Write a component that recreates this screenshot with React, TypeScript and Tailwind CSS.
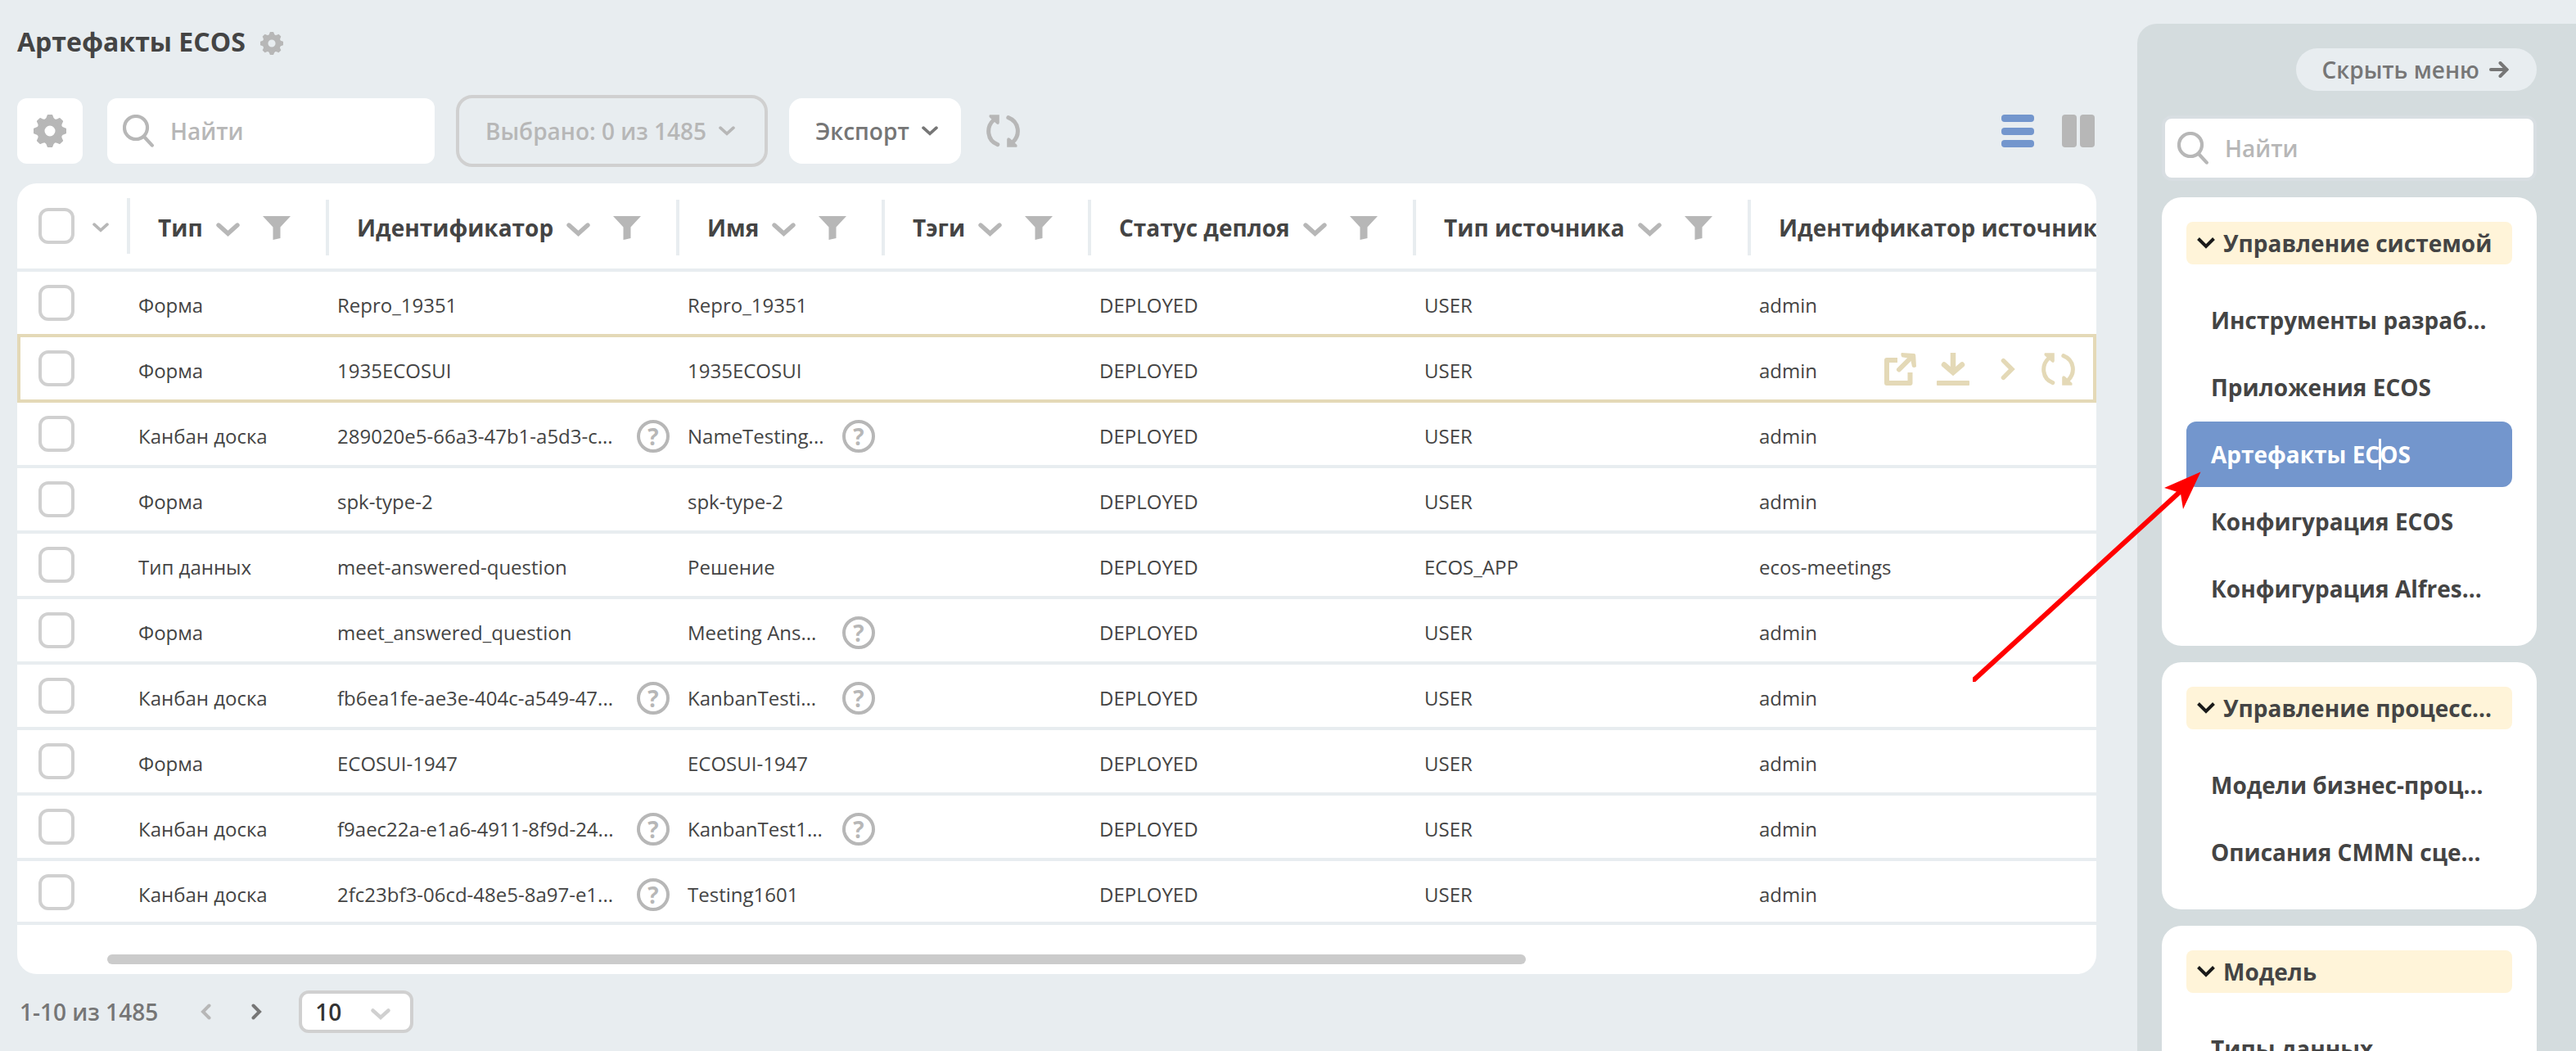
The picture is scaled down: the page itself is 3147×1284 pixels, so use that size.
import type { ReactNode } from "react";

type IconProps = { className?: string };

function GearIcon({ className }: IconProps) {
  return (
    <svg viewBox="-20 -20 40 40" className={className} fill="currentColor" aria-hidden="true">
      <circle r="10.8" fill="none" stroke="currentColor" strokeWidth="8.6" />
      {[0, 45, 90, 135, 180, 225, 270, 315].map((a) => (
        <path key={a} transform={`rotate(${a})`} d="M-2.4 -20H2.4Q3.2 -20 3.4 -19Q4 -15.5 7 -13.4L0 -11L-7 -13.4Q-4 -15.5 -3.4 -19Q-3.2 -20 -2.4 -20Z" />
      ))}
    </svg>
  );
}

function SearchIcon({ className }: IconProps) {
  return (
    <svg viewBox="0 0 38 40" className={className} fill="none" stroke="currentColor" strokeWidth="4.2" strokeLinecap="round" aria-hidden="true">
      <circle cx="16" cy="16" r="14" />
      <path d="M26.5 27.5L35.8 37.6" />
    </svg>
  );
}

function ChevronDown({ className }: IconProps) {
  return (
    <svg viewBox="0 0 29 17" className={className} fill="none" stroke="currentColor" strokeWidth="5.4" strokeLinecap="round" strokeLinejoin="miter" aria-hidden="true">
      <path d="M3 3L14.5 13.3L26 3" />
    </svg>
  );
}

function ChevronRight({ className }: IconProps) {
  return (
    <svg viewBox="0 0 13 20" className={className} fill="none" stroke="currentColor" strokeWidth="4" strokeLinecap="round" aria-hidden="true">
      <path d="M2.5 2.5L10 10L2.5 17.5" />
    </svg>
  );
}

function FilterIcon() {
  return (
    <svg viewBox="0 0 34 29" className="h-[29px] w-[34px] shrink-0" fill="currentColor" aria-hidden="true">
      <path d="M0 0H34L21.5 13.5V27L12.5 29V13.5Z" />
    </svg>
  );
}

function RefreshIcon({ className }: IconProps) {
  return (
    <svg viewBox="0 0 41 40" className={className} fill="none" stroke="currentColor" strokeWidth="5" strokeLinecap="round" aria-hidden="true">
      <path d="M9 6.5C-0.5 15 0.5 31.5 13.8 36.6" />
      <path d="M26.8 3.6C40.5 9 41.5 25 32.5 33.5" />
      <path d="M4 0.2H15.8V10Q15 13 12.5 11.2L3.6 3Q3.2 1 4 0.2Z" fill="currentColor" stroke="none" />
      <path d="M37.2 39.8H25.2V30Q26 27 28.5 28.8L37.4 37Q37.8 39 37.2 39.8Z" fill="currentColor" stroke="none" />
    </svg>
  );
}

function ExternalIcon() {
  return (
    <svg viewBox="0 0 40 40" className="size-10" fill="none" stroke="currentColor" strokeWidth="6" strokeLinejoin="round" aria-hidden="true">
      <path d="M16 9H3V37H31.5V24" />
      <path d="M18 20.5L33 5.5" strokeLinecap="round" strokeWidth="6" />
      <path d="M21 0L36.5 1Q38 1 38.2 3L39 17Q36 19 34 17L32.5 10L29 6.5L21.5 5.2Q19.5 2 21 0Z" fill="currentColor" stroke="none" />
    </svg>
  );
}

function DownloadIcon() {
  return (
    <svg viewBox="0 0 40 40" className="size-10" fill="none" stroke="currentColor" strokeWidth="6.5" aria-hidden="true">
      <path d="M20 0V22" />
      <path d="M9 14.5L20 24L31 14.5" strokeLinecap="round" />
      <rect x="0" y="34" width="40" height="6" rx="1" fill="currentColor" stroke="none" />
    </svg>
  );
}

function ArrowRight() {
  return (
    <svg viewBox="0 0 24 20" className="h-5 w-6 shrink-0" fill="none" stroke="currentColor" strokeWidth="4" strokeLinecap="round" aria-hidden="true">
      <path d="M2 10H21" />
      <path d="M13.5 2L21.5 10L13.5 18" />
    </svg>
  );
}

function MenuChevron() {
  return (
    <svg viewBox="0 0 22 14" className="h-3.5 w-[22px] shrink-0" fill="none" stroke="#1a1a1a" strokeWidth="4" aria-hidden="true">
      <path d="M1.5 1.5L11 11L20.5 1.5" />
    </svg>
  );
}

const headers = ["Тип", "Идентификатор", "Имя", "Тэги", "Статус деплоя", "Тип источника"];

type Row = { type: string; id: string; idHint?: boolean; name: string; nameHint?: boolean; source: string; sourceId: string };

const rows: Row[] = [
  { type: "Форма", id: "Repro_19351", name: "Repro_19351", source: "USER", sourceId: "admin" },
  { type: "Форма", id: "1935ECOSUI", name: "1935ECOSUI", source: "USER", sourceId: "admin" },
  { type: "Канбан доска", id: "289020e5-66a3-47b1-a5d3-c...", idHint: true, name: "NameTesting...", nameHint: true, source: "USER", sourceId: "admin" },
  { type: "Форма", id: "spk-type-2", name: "spk-type-2", source: "USER", sourceId: "admin" },
  { type: "Тип данных", id: "meet-answered-question", name: "Решение", source: "ECOS_APP", sourceId: "ecos-meetings" },
  { type: "Форма", id: "meet_answered_question", name: "Meeting Ans...", nameHint: true, source: "USER", sourceId: "admin" },
  { type: "Канбан доска", id: "fb6ea1fe-ae3e-404c-a549-47...", idHint: true, name: "KanbanTesti...", nameHint: true, source: "USER", sourceId: "admin" },
  { type: "Форма", id: "ECOSUI-1947", name: "ECOSUI-1947", source: "USER", sourceId: "admin" },
  { type: "Канбан доска", id: "f9aec22a-e1a6-4911-8f9d-24...", idHint: true, name: "KanbanTest1...", nameHint: true, source: "USER", sourceId: "admin" },
  { type: "Канбан доска", id: "2fc23bf3-06cd-48e5-8a97-e1...", idHint: true, name: "Testing1601", source: "USER", sourceId: "admin" },
];

const activeRow = 1;

function Checkbox({ label }: { label: string }) {
  return (
    <input
      type="checkbox"
      aria-label={label}
      className="block size-11 shrink-0 appearance-none rounded-xl border-4 border-[#d0d0d0] bg-white checked:bg-[#7396cd]"
    />
  );
}

function Hint() {
  return (
    <button
      type="button"
      aria-label="Подсказка"
      className="mr-3 flex size-10 shrink-0 items-center justify-center rounded-full border-4 border-[#b7b7b7] text-[28px] font-bold leading-8 text-[#b7b7b7]"
    >
      ?
    </button>
  );
}

function Cell({ border, children }: { border: string; children?: ReactNode }) {
  return (
    <td className={`border-b-4 p-0 pl-2.5 pt-[21px] align-top ${border}`}>
      <div className="flex h-10 items-center justify-between">{children}</div>
    </td>
  );
}

function ArtifactsTable() {
  return (
    <div className="mt-5 overflow-hidden rounded-3xl bg-white">
      <table className="w-full table-fixed border-separate border-spacing-0 text-left text-2xl leading-9">
        <colgroup>
          <col className="w-[138px]" />
          <col className="w-[243px]" />
          <col className="w-[428px]" />
          <col className="w-[251px]" />
          <col className="w-[252px]" />
          <col className="w-[397px]" />
          <col className="w-[409px]" />
          <col />
        </colgroup>
        <thead>
          <tr className="h-[108px] text-[28px]">
            <th className="border-b-4 border-[#e8edf0] p-0 pt-[18px] align-top font-semibold">
              <div className="flex h-[68px] items-center gap-[22px] border-r-4 border-[#e8edf0] pl-[26px]">
                <Checkbox label="Выбрать все" />
                <button type="button" aria-label="Параметры выбора" className="pt-1 text-[#b7b7b7]">
                  <ChevronDown className="h-3 w-5" />
                </button>
              </div>
            </th>
            {headers.map((h) => (
              <th key={h} className="border-b-4 border-[#e8edf0] p-0 pt-5 align-top font-bold">
                <div className="flex h-[68px] items-center border-r-4 border-[#e8edf0] pl-[34px]">
                  <span className="whitespace-nowrap">{h}</span>
                  <button type="button" aria-label={`Сортировать: ${h}`} className="ml-4 pt-1 text-[#b7b7b7]">
                    <ChevronDown className="h-[17px] w-[29px]" />
                  </button>
                  <button type="button" aria-label={`Фильтр: ${h}`} className="ml-7 text-[#b7b7b7]">
                    <FilterIcon />
                  </button>
                </div>
              </th>
            ))}
            <th className="overflow-hidden whitespace-nowrap border-b-4 border-[#e8edf0] p-0 pt-5 align-top font-bold">
              <div className="flex h-[68px] items-center pl-[34px]">Идентификатор источника</div>
            </th>
          </tr>
        </thead>
        <tbody className="whitespace-nowrap">
          {rows.map((r, i) => {
            const active = i === activeRow;
            const border = active || i === activeRow - 1 ? "border-[#e4d9b7]" : "border-[#e8edf0]";
            return (
              <tr key={r.id} className={i === rows.length - 1 ? "h-[78px]" : "h-20"}>
                <td className={`border-b-4 p-0 pt-4 align-top ${border} ${active ? "border-l-4 pl-[22px]" : "pl-[26px]"}`}>
                  <Checkbox label={`Выбрать ${r.id}`} />
                </td>
                <Cell border={border}>{r.type}</Cell>
                <Cell border={border}>
                  {r.id}
                  {r.idHint && <Hint />}
                </Cell>
                <Cell border={border}>
                  {r.name}
                  {r.nameHint && <Hint />}
                </Cell>
                <Cell border={border} />
                <Cell border={border}>DEPLOYED</Cell>
                <Cell border={border}>{r.source}</Cell>
                <Cell border={active ? "border-r-4 border-[#e4d9b7]" : border}>
                  {r.sourceId}
                  {active && (
                    <div className="mr-[22px] flex items-center pb-1 text-[#e4d9b7]">
                      <button type="button" aria-label="Открыть" className="mr-6"><ExternalIcon /></button>
                      <button type="button" aria-label="Скачать" className="mr-[38px]"><DownloadIcon /></button>
                      <button type="button" aria-label="Перейти" className="mr-8"><ChevronRight className="h-7 w-[18px]" /></button>
                      <button type="button" aria-label="Обновить"><RefreshIcon className="h-10 w-[41px]" /></button>
                    </div>
                  )}
                </Cell>
              </tr>
            );
          })}
        </tbody>
      </table>
      <div className="pb-3 pl-[110px] pt-9">
        <div className="h-3 w-[71.3%] rounded-full bg-[#cbcbcb]" />
      </div>
    </div>
  );
}

const menu = [
  { title: "Управление системой", items: ["Инструменты разраб...", "Приложения ECOS", "Артефакты ECOS", "Конфигурация ECOS", "Конфигурация Alfres..."] },
  { title: "Управление процесс...", items: ["Модели бизнес-проц...", "Описания CMMN сце..."] },
  { title: "Модель", items: ["Типы данных"] },
];

function MenuItem({ label, active }: { label: string; active: boolean }) {
  return (
    <li>
      <a
        href="#"
        className={`relative flex h-20 items-center whitespace-nowrap rounded-xl pl-[30px] ${active ? "bg-[#7396cd] text-white" : ""}`}
      >
        {label}
        {active && <span className="absolute left-[235px] top-[21px] h-[38px] w-[3px] bg-white" />}
      </a>
    </li>
  );
}

function Sidebar() {
  return (
    <aside className="relative mt-[29px] w-[536px] shrink-0 rounded-tl-3xl bg-[#d4dcde] pl-[30px] pr-12 pt-[30px]">
      <div className="flex justify-end">
        <button type="button" className="flex h-[52px] items-center gap-3 rounded-full bg-[#e8edf0] pl-8 pr-[34px] text-[28px] font-semibold text-[#767676]">
          Скрыть меню
          <ArrowRight />
        </button>
      </div>
      <label className="mt-[30px] flex h-20 items-center gap-5 rounded-xl border-4 border-[#d8dee2] bg-white pl-[15px] text-[#b7b7b7]">
        <SearchIcon className="h-10 w-[38px] shrink-0" />
        <input type="text" placeholder="Найти" aria-label="Поиск по меню" className="min-w-0 flex-1 text-[28px] font-semibold outline-none placeholder:text-[#b7b7b7]" />
      </label>
      <nav className="mt-5 flex flex-col gap-5 text-[28px] font-bold">
        {menu.map((g) => (
          <section key={g.title} className="rounded-3xl bg-white p-[30px]">
            <button type="button" className="flex h-[52px] w-full items-center gap-2.5 whitespace-nowrap rounded-lg bg-[#fff4d9] pl-[13px]">
              <MenuChevron />
              {g.title}
            </button>
            <ul className="mt-7 flex flex-col gap-0.5">
              {g.items.map((it) => (
                <MenuItem key={it} label={it} active={it === "Артефакты ECOS"} />
              ))}
            </ul>
          </section>
        ))}
      </nav>
      <svg viewBox="0 0 280 258" className="pointer-events-none absolute -left-[201px] top-[546px] h-[258px] w-[280px]" aria-hidden="true">
        <path d="M1 256L254 25" stroke="#ff0000" strokeWidth="6" fill="none" strokeLinecap="round" />
        <path d="M278.5 1.5L234 21L250 26L254 28L257 47Z" fill="#ff0000" />
      </svg>
    </aside>
  );
}

export default function App() {
  return (
    <div className="flex h-screen overflow-hidden bg-[#e8edf0] font-['Open_Sans','Noto_Sans',sans-serif] text-[#444444]">
      <main className="min-w-0 flex-1 pl-[21px] pr-[50px] pt-[31px]">
        <div className="flex items-center gap-[18px]">
          <h1 className="text-[32px] font-bold leading-10">Артефакты ECOS</h1>
          <button type="button" aria-label="Настройки журнала" className="pt-1 text-[#b7b7b7]">
            <GearIcon className="size-7" />
          </button>
        </div>
        <div className="mt-[45px] flex items-center text-[28px]">
          <button type="button" aria-label="Настройки таблицы" className="flex size-20 items-center justify-center rounded-xl bg-white text-[#b7b7b7]">
            <GearIcon className="size-10" />
          </button>
          <label className="ml-[30px] flex h-20 w-[400px] items-center gap-5 rounded-xl bg-white pl-[19px] text-[#b7b7b7]">
            <SearchIcon className="h-10 w-[38px] shrink-0" />
            <input type="text" placeholder="Найти" aria-label="Поиск" className="min-w-0 flex-1 font-semibold outline-none placeholder:text-[#b7b7b7]" />
          </label>
          <button type="button" className="ml-[26px] flex h-[88px] items-center gap-[15px] rounded-[20px] border-4 border-[#d0d0d0] pl-8 pr-9 font-semibold text-[#b7b7b7]">
            Выбрано: 0 из 1485
            <ChevronDown className="h-3 w-5" />
          </button>
          <button type="button" className="ml-[26px] flex h-20 items-center gap-[15px] rounded-2xl bg-white pl-8 pr-7 font-semibold text-[#767676]">
            Экспорт
            <ChevronDown className="h-3 w-5" />
          </button>
          <button type="button" aria-label="Обновить" className="ml-[31px] text-[#b7b7b7]">
            <RefreshIcon className="h-10 w-[41px]" />
          </button>
          <div className="ml-auto mr-0.5 flex gap-[34px]">
            <button type="button" aria-label="Список" className="text-[#7396cd]">
              <svg viewBox="0 0 40 40" className="size-10" fill="currentColor" aria-hidden="true">
                <rect width="40" height="9" rx="4" />
                <rect y="16" width="40" height="9" rx="4" />
                <rect y="31" width="40" height="9" rx="4" />
              </svg>
            </button>
            <button type="button" aria-label="Колонки" className="text-[#b7b7b7]">
              <svg viewBox="0 0 40 40" className="size-10" fill="currentColor" aria-hidden="true">
                <rect width="18" height="40" rx="4" />
                <rect x="22" width="18" height="40" rx="4" />
              </svg>
            </button>
          </div>
        </div>
        <ArtifactsTable />
        <div className="mt-5 flex items-center pl-[3px] text-[28px]">
          <span className="font-semibold text-[#767676]">1-10 из 1485</span>
          <button type="button" aria-label="Назад" className="ml-[52px] rotate-180 text-[#b7b7b7]">
            <ChevronRight className="h-5 w-[13px]" />
          </button>
          <button type="button" aria-label="Вперёд" className="ml-[49px] text-[#767676]">
            <ChevronRight className="h-5 w-[13px]" />
          </button>
          <div className="relative ml-[45px]">
            <select aria-label="Строк на странице" className="block h-[52px] w-[140px] appearance-none rounded-xl border-4 border-[#d0d0d0] bg-white pl-4 font-semibold leading-9 text-[#333333]">
              <option>10</option>
            </select>
            <ChevronDown className="pointer-events-none absolute right-7 top-[22px] h-3.5 w-6 text-[#d0d0d0]" />
          </div>
        </div>
      </main>
      <Sidebar />
    </div>
  );
}
